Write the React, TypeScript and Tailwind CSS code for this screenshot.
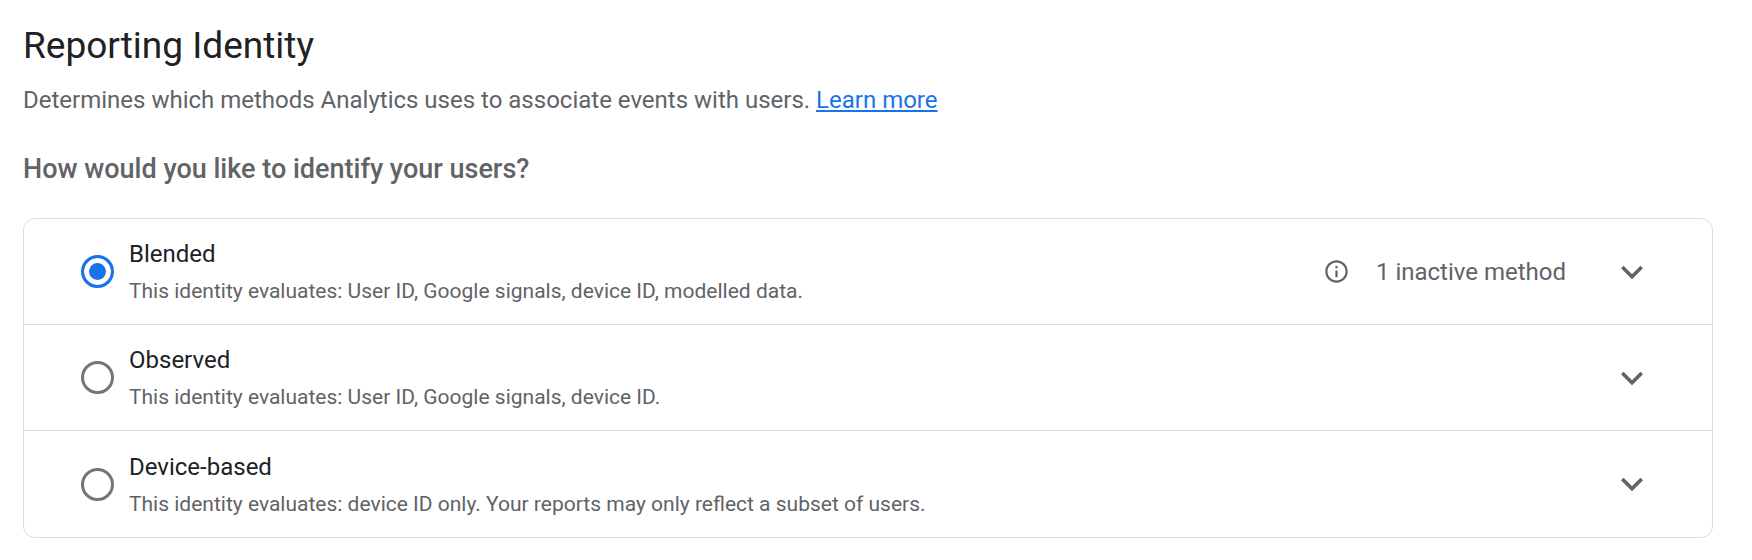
import { useState } from "react";

type Identity = {
  id: string;
  label: string;
  description: string;
  notice?: string;
};

const IDENTITIES: Identity[] = [
  {
    id: "blended",
    label: "Blended",
    description: "This identity evaluates: User ID, Google signals, device ID, modelled data.",
    notice: "1 inactive method",
  },
  {
    id: "observed",
    label: "Observed",
    description: "This identity evaluates: User ID, Google signals, device ID.",
  },
  {
    id: "device",
    label: "Device-based",
    description:
      "This identity evaluates: device ID only. Your reports may only reflect a subset of users.",
  },
];

function InfoIcon() {
  return (
    <svg viewBox="0 0 24 24" className="size-[27px] shrink-0" fill="currentColor" aria-hidden="true">
      <path d="M11 7h2v2h-2zm0 4h2v6h-2zm1-9C6.48 2 2 6.48 2 12s4.48 10 10 10 10-4.48 10-10S17.52 2 12 2zm0 18c-4.41 0-8-3.59-8-8s3.59-8 8-8 8 3.59 8 8-3.59 8-8 8z" />
    </svg>
  );
}

function ExpandIcon() {
  return (
    <svg viewBox="0 0 24 24" className="size-11" fill="currentColor" aria-hidden="true">
      <path d="M16.59 8.59 12 13.17 7.41 8.59 6 10l6 6 6-6z" />
    </svg>
  );
}

export default function App() {
  const [selected, setSelected] = useState("blended");

  return (
    <main className="bg-white pt-6 pr-[39px] pb-5 pl-[23px] font-['Roboto',sans-serif] text-[#616366]">
      <h1 className="text-[37px] leading-[44px] text-[#202124]">Reporting Identity</h1>
      <p className="mt-4 text-[24px] leading-8">
        Determines which methods Analytics uses to associate events with users.{" "}
        <a href="#learn-more" className="text-[#1a73e8] underline decoration-2 underline-offset-2">
          Learn more
        </a>
      </p>
      <h2 id="identify-users" className="mt-[35px] text-[27px] leading-9 font-medium">
        How would you like to identify your users?
      </h2>

      <div
        role="radiogroup"
        aria-labelledby="identify-users"
        className="mt-[31px] divide-y divide-[#dadce0] rounded-xl border border-[#dadce0]"
      >
        {IDENTITIES.map(({ id, label, description, notice }) => (
          <div key={id} className="flex min-h-[106px] items-center pr-[58px] pl-[57px]">
            <input
              type="radio"
              id={id}
              name="identity"
              checked={selected === id}
              onChange={() => setSelected(id)}
              className="size-[33px] shrink-0 appearance-none rounded-full border-[3px] border-[#757575] checked:border-[#1a73e8] checked:bg-[#1a73e8] checked:shadow-[inset_0_0_0_5px_white]"
            />
            <label htmlFor={id} className="ml-[15px] flex-1 pt-0.5">
              <span className="block text-[24px] leading-9 text-[#202124]">{label}</span>
              <span className="mt-px block text-[21px] leading-9">{description}</span>
            </label>
            {notice && (
              <div className="mr-11 flex items-center gap-[26px]">
                <InfoIcon />
                <span className="text-[24px] leading-8">{notice}</span>
              </div>
            )}
            <button type="button" aria-label={`Expand ${label}`}>
              <ExpandIcon />
            </button>
          </div>
        ))}
      </div>
    </main>
  );
}
